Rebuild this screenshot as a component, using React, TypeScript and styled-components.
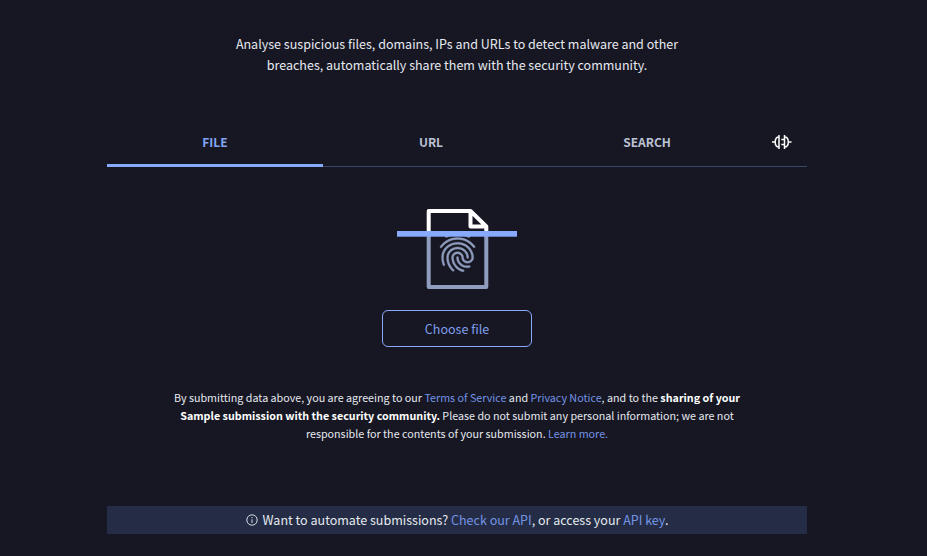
import React from "react";
import styled, { createGlobalStyle } from "styled-components";
import { MdFingerprint } from "react-icons/md";

const GlobalStyle = createGlobalStyle`
  * { box-sizing: border-box; }
  html, body { margin: 0; background: #171723; }
  body {
    color: #e6e9f0;
    font-family: "Noto Sans CJK SC", "Noto Sans", sans-serif;
    font-size: 12.53px;
    overflow: hidden;
  }
`;

const Page = styled.main`
  width: 914px;
  height: 556px;
  padding-top: 33px;
  display: flex;
  flex-direction: column;
  align-items: center;
`;

const Intro = styled.p`
  margin: 0 0 44px;
  height: 42px;
  line-height: 21px;
  text-align: center;
  white-space: nowrap;
`;

const Tabs = styled.nav`
  width: 700px;
  height: 48px;
  display: flex;
  border-bottom: 1px solid #384866;
`;

const Tab = styled.button<{ $active?: boolean }>`
  width: 216px;
  height: 48px;
  padding: 0;
  border: 0;
  border-bottom: 3px solid ${(p) => (p.$active ? "#88aafc" : "transparent")};
  background: none;
  color: ${(p) => (p.$active ? "#84a4f4" : "#bcc3d6")};
  font: 700 12px/45px "Noto Sans CJK SC", "Noto Sans", sans-serif;
`;

const IconTab = styled.div`
  width: 52px;
  height: 46px;
  padding-left: 1px;
  display: flex;
  align-items: center;
  justify-content: center;
`;

const Scan = styled.svg`
  display: block;
  margin-top: 42px;
`;

const Fingerprint = styled(MdFingerprint)`
  color: #8f9dbe;

  path:last-child {
    stroke-width: 0.2px;
  }
`;

const ChooseButton = styled.button`
  width: 150px;
  height: 37px;
  margin-top: 21px;
  padding: 0;
  border: 1px solid #88aafc;
  border-radius: 6px;
  background: none;
  color: #7f9fec;
  font: 400 12.53px/35px "Noto Sans CJK SC", "Noto Sans", sans-serif;
`;

const Terms = styled.p`
  margin: 42px 0 0;
  height: 54px;
  font-size: 10.74px;
  line-height: 18px;
  text-align: center;
  white-space: nowrap;
`;

const Strong = styled.strong`
  color: #fff;
`;

const Link = styled.a`
  color: #7494e6;
`;

const Banner = styled.aside`
  width: 700px;
  height: 28px;
  margin-top: 63px;
  display: flex;
  align-items: center;
  justify-content: center;
  gap: 5px;
  background: #242d45;
  line-height: 28px;
  white-space: nowrap;
`;

function PlugIcon() {
  return (
    <svg width="20" height="16" viewBox="0 0 20 16" fill="none" stroke="#fff" strokeWidth="1.5">
      <path d="M0 8H3M7 1V15M7 3C4.5 3 3.2 5 3.2 8S4.5 13 7 13" />
      <path d="M12.5 1V15M12.5 3C15 3 16.3 5 16.3 8S15 13 12.5 13M16.5 8H19.5M9.3 5.5H12.5M9.3 10.5H12.5" />
    </svg>
  );
}

function ScanIcon() {
  return (
    <Scan width="120" height="80" viewBox="0 0 120 80">
      <path d="M31.7 24V78H89.3V24" fill="none" stroke="#8f9dbe" strokeWidth="4" strokeLinejoin="round" />
      <path d="M31.7 24V2H73.5L89.3 17.5V24M73.5 2V17.5H89.3" fill="none" stroke="#fff" strokeWidth="4" strokeLinejoin="round" />
      <Fingerprint x={37.2} y={19.9} size={46.8} />
      <rect y="22" width="120" height="5.7" fill="#88aafc" />
    </Scan>
  );
}

function InfoIcon() {
  return (
    <svg width="12" height="12" viewBox="0 0 12 12" fill="none" stroke="#d5dae6">
      <circle cx="6" cy="6" r="5.2" />
      <path d="M6 5.3V9M6 3V4.2" />
    </svg>
  );
}

export default function App() {
  return (
    <>
      <GlobalStyle />
      <Page>
        <Intro>
          Analyse suspicious files, domains, IPs and URLs to detect malware and other
          <br />
          breaches, automatically share them with the security community.
        </Intro>
        <Tabs>
          <Tab $active>FILE</Tab>
          <Tab>URL</Tab>
          <Tab>SEARCH</Tab>
          <IconTab>
            <PlugIcon />
          </IconTab>
        </Tabs>
        <ScanIcon />
        <ChooseButton>Choose file</ChooseButton>
        <Terms>
          By submitting data above, you are agreeing to our <Link>Terms of Service</Link> and{" "}
          <Link>Privacy Notice</Link>, and to the <Strong>sharing of your</Strong>
          <br />
          <Strong>Sample submission with the security community.</Strong> Please do not submit any personal
          information; we are not
          <br />
          responsible for the contents of your submission. <Link>Learn more.</Link>
        </Terms>
        <Banner>
          <InfoIcon />
          <span>
            Want to automate submissions? <Link>Check our API</Link>, or access your <Link>API key</Link>.
          </span>
        </Banner>
      </Page>
    </>
  );
}
